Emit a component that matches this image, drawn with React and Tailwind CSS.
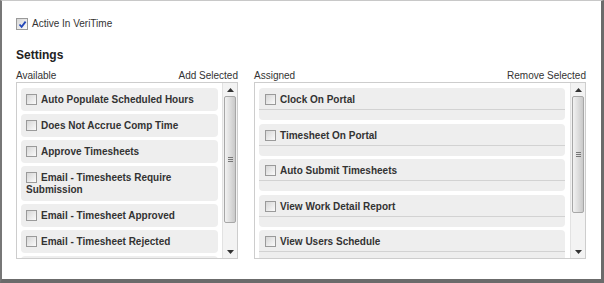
const available = [
  'Auto Populate Scheduled Hours',
  'Does Not Accrue Comp Time',
  'Approve Timesheets',
  'Email - Timesheets Require Submission',
  'Email - Timesheet Approved',
  'Email - Timesheet Rejected',
];

const assigned = [
  'Clock On Portal',
  'Timesheet On Portal',
  'Auto Submit Timesheets',
  'View Work Detail Report',
  'View Users Schedule',
];

const Box = ({ checked, className = '' }) => (
  <span
    className={`inline-flex items-center justify-center w-[11px] h-[11px] border border-[#9a9a9a] bg-gradient-to-br from-[#d6d6d6] to-[#fbfbfb] shrink-0 ${className}`}
  >
    {checked && (
      <svg width="9" height="9" viewBox="0 0 9 9">
        <path d="M1.5 4.5 L3.6 6.8 L7.6 1.6" fill="none" stroke="#2347b8" strokeWidth="1.8" />
      </svg>
    )}
  </span>
);

const Scrollbar = ({ thumb }) => (
  <div className="w-[15px] shrink-0 flex flex-col bg-[#f3f3f3] border-l border-[#e2e2e2]">
    <div className="h-[13px] flex items-center justify-center">
      <svg width="7" height="4" viewBox="0 0 7 4">
        <path d="M0 4 L3.5 0 L7 4 Z" fill="#333" />
      </svg>
    </div>
    <div className={`mx-[1px] ${thumb} rounded-[2px] border border-[#a7a7a7] bg-gradient-to-r from-[#f2f2f2] via-[#dedede] to-[#c9c9c9] flex flex-col items-center justify-center gap-[1px]`}>
      <span className="w-[5px] h-px bg-[#777]" />
      <span className="w-[5px] h-px bg-[#777]" />
      <span className="w-[5px] h-px bg-[#777]" />
    </div>
    <div className="flex-1" />
    <div className="h-[13px] flex items-center justify-center">
      <svg width="7" height="4" viewBox="0 0 7 4">
        <path d="M0 0 L3.5 4 L7 0 Z" fill="#333" />
      </svg>
    </div>
  </div>
);

export default function App() {
  return (
    <div
      className="w-[604px] h-[283px] bg-white border-l-2 border-l-[#777] border-r-[3px] border-r-[#6b6b6b] border-b-4 border-b-[#6b6b6b] border-t border-t-[#c8c8c8] overflow-hidden text-[#333]"
      style={{ fontFamily: '"Liberation Sans", Arial, sans-serif' }}
    >
      <div className="pl-[14px] pt-[17px]">
        <div className="flex items-center gap-[4px] h-[12px]">
          <Box checked className="w-[12px] h-[12px] border-[#8e8e8e]" />
          <span className="text-[10px] leading-[12px]">Active In VeriTime</span>
        </div>

        <h2 className="mt-[18px] text-[12px] leading-[14px] font-bold text-[#222]">Settings</h2>

        <div className="mt-[8px] flex gap-[16px]">
          <div className="w-[222px]">
            <div className="flex justify-between text-[10px] leading-[12px]">
              <span>Available</span>
              <span>Add Selected</span>
            </div>
            <div className="h-[177px] border border-[#cdcdcd] flex overflow-hidden">
              <div className="flex-1 overflow-hidden pl-[4px] pr-[4px] pt-[5px] flex flex-col gap-[3px]">
                {available.map((item) => (
                  <div
                    key={item}
                    className="bg-[#eeeeee] rounded-[4px] pl-[5px] pr-[4px] pt-[6px] pb-[5px] text-[10px] leading-[12px] font-bold text-[#333] shrink-0"
                  >
                    <Box className="align-[-2px] mr-[4px]" />
                    {item}
                  </div>
                ))}
                <div className="bg-[#eeeeee] rounded-[4px] h-[24px] shrink-0" />
              </div>
              <Scrollbar thumb="h-[127px]" />
            </div>
          </div>

          <div className="w-[332px]">
            <div className="flex justify-between text-[10px] leading-[12px]">
              <span>Assigned</span>
              <span>Remove Selected</span>
            </div>
            <div className="h-[177px] border border-[#cdcdcd] flex overflow-hidden">
              <div className="flex-1 overflow-hidden pl-[4px] pr-[5px] pt-[5px] flex flex-col gap-[3.5px]">
                {assigned.map((item) => (
                  <div key={item} className="bg-[#eeeeee] rounded-[4px] h-[32px] shrink-0">
                    <div className="flex items-center gap-[4px] pl-[6px] pt-[5px] pb-[3px] border-b border-[#d2d2d2] text-[10px] leading-[13px] font-bold text-[#333]">
                      <Box />
                      <span>{item}</span>
                    </div>
                  </div>
                ))}
              </div>
              <Scrollbar thumb="h-[117px]" />
            </div>
          </div>
        </div>
      </div>
    </div>
  );
}
